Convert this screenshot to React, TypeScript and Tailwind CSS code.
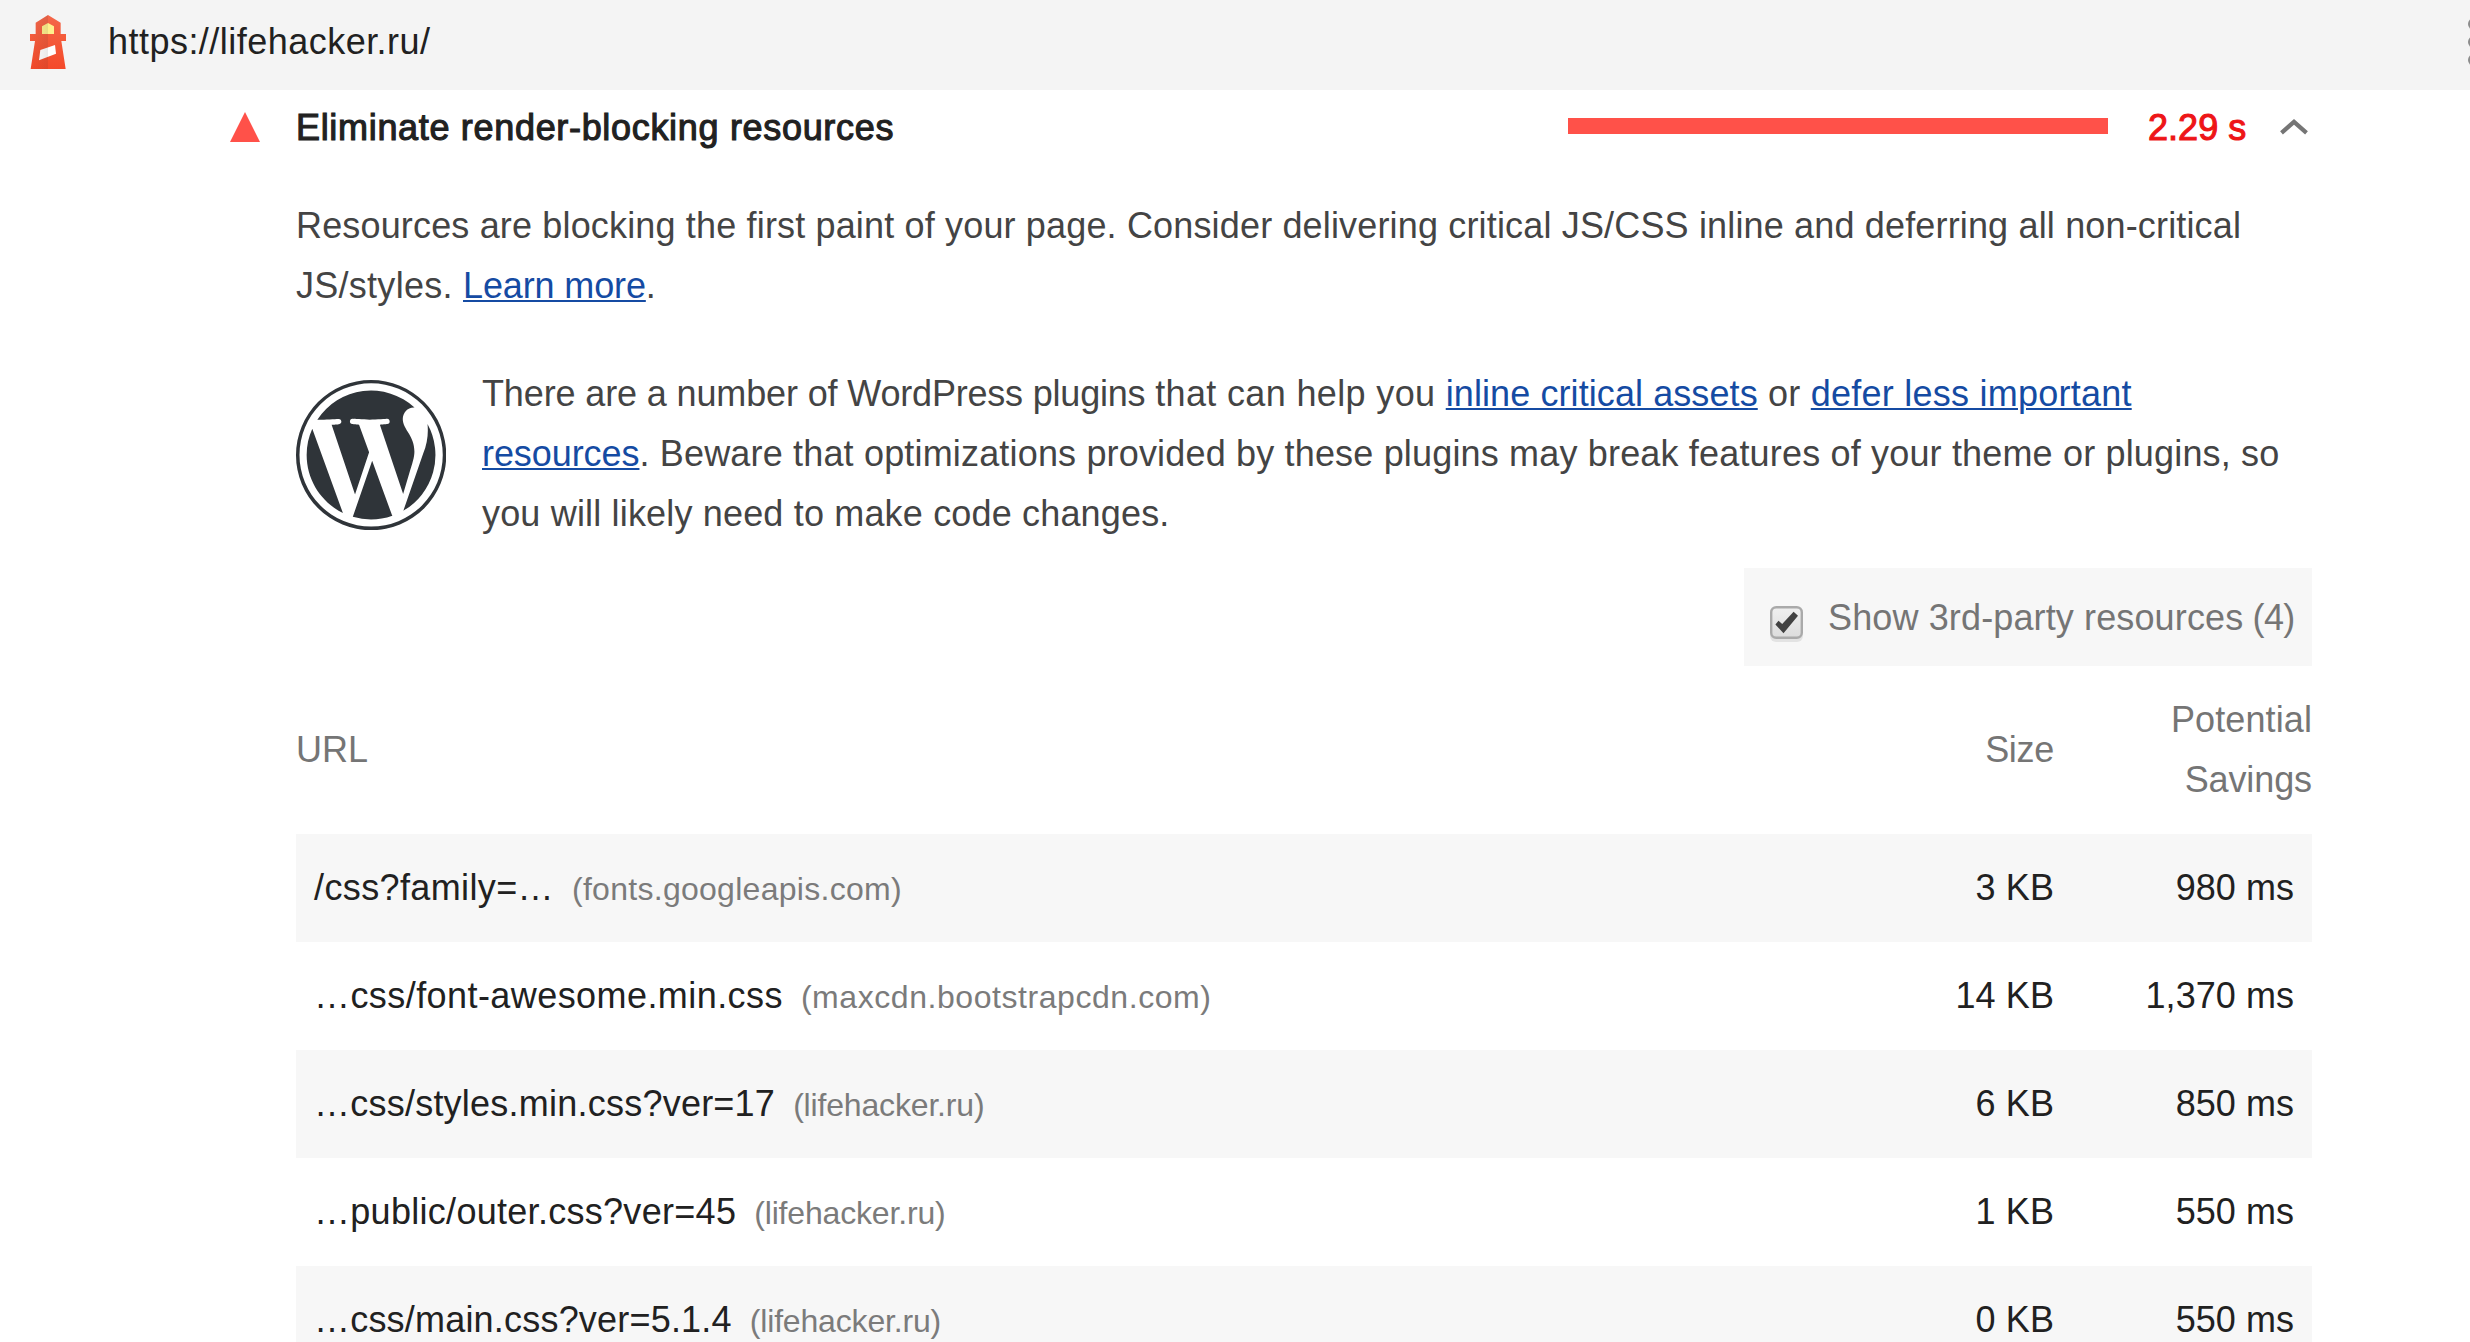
type Row = {
  path: string;
  host: string;
  size: string;
  savings: string;
  pathSpacing: string;
  hostSpacing: string;
};

const rows: Row[] = [
  { path: "/css?family=…", host: "(fonts.googleapis.com)", size: "3 KB", savings: "980 ms", pathSpacing: "tracking-[0.38px]", hostSpacing: "tracking-[0.28px]" },
  { path: "…css/font-awesome.min.css", host: "(maxcdn.bootstrapcdn.com)", size: "14 KB", savings: "1,370 ms", pathSpacing: "tracking-[0.43px]", hostSpacing: "tracking-[0.56px]" },
  { path: "…css/styles.min.css?ver=17", host: "(lifehacker.ru)", size: "6 KB", savings: "850 ms", pathSpacing: "tracking-[0.23px]", hostSpacing: "tracking-[-0.17px]" },
  { path: "…public/outer.css?ver=45", host: "(lifehacker.ru)", size: "1 KB", savings: "550 ms", pathSpacing: "tracking-[0.29px]", hostSpacing: "tracking-[-0.17px]" },
  { path: "…css/main.css?ver=5.1.4", host: "(lifehacker.ru)", size: "0 KB", savings: "550 ms", pathSpacing: "tracking-[0.2px]", hostSpacing: "tracking-[-0.17px]" },
];

const link = "text-[#154ba3] underline decoration-2 underline-offset-2";

function LighthouseLogo() {
  return (
    <svg className="h-[54px] w-9 shrink-0" viewBox="0 0 108 162">
      <defs>
        <linearGradient id="tower" x1="0" y1="0" x2="0" y2="1">
          <stop offset="0" stopColor="#f4674a" />
          <stop offset="0.45" stopColor="#f45a3a" />
          <stop offset="1" stopColor="#f4492a" />
        </linearGradient>
        <linearGradient id="shade" x1="0" y1="0" x2="1" y2="0">
          <stop offset="0" stopColor="#262626" stopOpacity="0" />
          <stop offset="1" stopColor="#262626" stopOpacity="0.1" />
        </linearGradient>
      </defs>
      <path fill="url(#tower)" d="M54 0 92 23v34h16v21H94l13 84H2l13-84H0V57h17V23z" />
      <path fill="#fff08c" d="M54 24 72 34v23H36V34z" />
      <path fill="#fff" d="M31 105 75 90l3 26-51 20z" />
      <path fill="url(#shade)" d="M54 0v162H2l13-84H0V57h17V23z" />
    </svg>
  );
}

function WordPressLogo() {
  return (
    <svg className="h-[150px] w-[150px] shrink-0" viewBox="0 0 122.5 122.5" fill="#2f3439">
      <path d="M8.7 61.3c0 20.8 12.1 38.7 29.6 47.3l-25-68.7c-3 6.5-4.6 13.7-4.6 21.4zM96.7 58.6c0-6.5-2.3-11-4.3-14.5-2.7-4.3-5.2-8-5.2-12.3 0-4.8 3.7-9.3 8.9-9.3h.7a52.4 52.4 0 0 0-79.4 9.9h3.3c5.5 0 14-.6 14-.6 2.9-.2 3.2 4 .4 4.3 0 0-2.9.4-6 .5l19.1 57L59.7 59l-8.2-22.5c-2.8-.1-5.5-.5-5.5-.5-2.8-.1-2.5-4.5.3-4.3 0 0 8.7.7 13.9.7 5.5 0 14-.7 14-.7 2.8-.2 3.2 4 .3 4.3 0 0-2.8.4-6 .5l19 56.5 5.2-17.5c2.3-7.3 4-12.5 4-17z" />
      <path d="M62.2 65.9l-15.8 45.8a52.6 52.6 0 0 0 32.3-.9l-.4-.7zM107.4 36a49.6 49.6 0 0 1-3.6 24.2l-16.1 46.5A52.5 52.5 0 0 0 107.4 36z" />
      <path d="M61.3 0a61.3 61.3 0 1 0 .1 122.7A61.3 61.3 0 0 0 61.3 0zm0 119.7a58.5 58.5 0 1 1 .1-117 58.5 58.5 0 0 1-.1 117z" />
    </svg>
  );
}

function Checkbox() {
  return (
    <svg className="mt-[18px] h-[38px] w-9 shrink-0" viewBox="0 0 36 38">
      <defs>
        <linearGradient id="box" x1="0" y1="0" x2="0" y2="1">
          <stop offset="0" stopColor="#f0f0f0" />
          <stop offset="1" stopColor="#dcdcdc" />
        </linearGradient>
      </defs>
      <rect x="1" y="4" width="33" height="32" rx="6" fill="#e3e3e3" />
      <rect x="2.2" y="1.2" width="30.6" height="30.6" rx="5" fill="url(#box)" stroke="#aaa" strokeWidth="2.4" />
      <path d="M6.4 18.5 9.5 14.7 13.2 18 24.6 5.7 29 9.7 14.5 27.3z" fill="#424242" />
    </svg>
  );
}

export default function App() {
  return (
    <div className="h-[1342px] w-[2470px] overflow-hidden bg-white font-['Liberation_Sans',Arial,sans-serif] text-[36px] leading-[60px] text-[#212121]">
      <header className="flex h-[90px] bg-[#f4f4f4] pl-[30px] pt-[15px]">
        <LighthouseLogo />
        <span className="-mt-[3px] ml-[42px] whitespace-nowrap tracking-[0.47px]">https://lifehacker.ru/</span>
        <svg className="ml-auto h-[60px] w-[2px] shrink-0" viewBox="0 0 2 60" fill="#8c8c8c">
          <circle cx="6" cy="9" r="6" />
          <circle cx="6" cy="27" r="6" />
          <circle cx="6" cy="45" r="6" />
        </svg>
      </header>

      <main className="ml-[230px] w-[2082px] pt-2">
        <div className="flex">
          <svg className="mt-[14px] h-[30px] w-[30px] shrink-0" viewBox="0 0 30 30">
            <path d="M15 0 30 30H0z" fill="#ff5149" />
          </svg>
          <h1 className="ml-9 whitespace-nowrap font-normal tracking-[0.68px] [-webkit-text-stroke:1.1px_#212121]">
            Eliminate render-blocking resources
          </h1>
          <div className="ml-auto mt-5 h-4 w-[540px] bg-[#ff5149]" />
          <span className="ml-10 w-[101px] whitespace-nowrap tracking-[0.05px] text-[#ee1517] [-webkit-text-stroke:1.1px_#ee1517]">
            2.29 s
          </span>
          <svg className="ml-[31px] mr-1 mt-[21px] h-4 w-7" viewBox="0 0 28 16">
            <path d="M1.5 13.8 14 2.8 26.5 13.8" fill="none" stroke="#757575" strokeWidth="4.2" />
          </svg>
        </div>

        <div className="ml-[66px]">
          <p className="mt-[38px] whitespace-nowrap text-[#444]">
            <span className="tracking-[0.16px]">
              Resources are blocking the first paint of your page. Consider delivering critical JS/CSS inline and deferring all non-critical
            </span>
            <br />
            <span className="tracking-[0.27px]">JS/styles. </span>
            <a className={`${link} tracking-[-0.13px]`}>Learn more</a>.
          </p>

          <div className="mt-12 flex">
            <div className="pt-4">
              <WordPressLogo />
            </div>
            <p className="ml-9 whitespace-nowrap text-[#444]">
              <span className="tracking-[-0.13px]">There are a number of </span>
              <span className="tracking-[-0.2px]">WordPress plugins </span>
              <span className="tracking-[0.35px]">that can help you </span>
              <a className={`${link} tracking-[0.086px]`}>inline critical assets</a>
              <span className="tracking-[0.25px]"> or </span>
              <a className={`${link} tracking-[0.24px]`}>defer less important</a>
              <br />
              <a className={`${link} tracking-[-0.07px]`}>resources</a>
              <span className="tracking-[0.17px]">
                . Beware that optimizations provided by these plugins may break features of your theme or plugins, so
              </span>
              <br />
              <span className="tracking-[0.17px]">you will likely need to make code changes.</span>
            </p>
          </div>

          <div className="mt-6 flex justify-end">
            <label className="flex h-[98px] w-[568px] bg-[#f7f7f7] pl-[25px] pt-5 text-[#757575]">
              <Checkbox />
              <span className="ml-[23px] whitespace-nowrap">
                <span className="tracking-[0.13px]">Show 3rd-party resources</span>
                <span className="tracking-[-0.7px]"> (4)</span>
              </span>
            </label>
          </div>

          <div className="mt-6 flex h-[144px] pb-6 text-[#757575]">
            <div className="flex-1 pt-[30px]">URL</div>
            <div className="w-[200px] pt-[30px] text-right tracking-[-0.3px]">Size</div>
            <div className="w-[258px] text-right">
              <span className="tracking-[0.1px]">Potential</span>
              <br />
              <span className="tracking-[-0.1px]">Savings</span>
            </div>
          </div>

          <div>
            {rows.map((row) => (
              <div key={row.path} className="flex h-[108px] px-[18px] pt-6 odd:bg-[#f7f7f7]">
                <div className="flex flex-1 items-baseline whitespace-nowrap">
                  <span className={row.pathSpacing}>{row.path}</span>
                  <span className={`ml-[18px] text-[32px] leading-[60px] text-[#7b7b7b] ${row.hostSpacing}`}>{row.host}</span>
                </div>
                <div className="w-[200px] text-right tracking-[0.1px]">{row.size}</div>
                <div className="w-[240px] text-right tracking-[0.05px]">{row.savings}</div>
              </div>
            ))}
          </div>
        </div>
      </main>
    </div>
  );
}
